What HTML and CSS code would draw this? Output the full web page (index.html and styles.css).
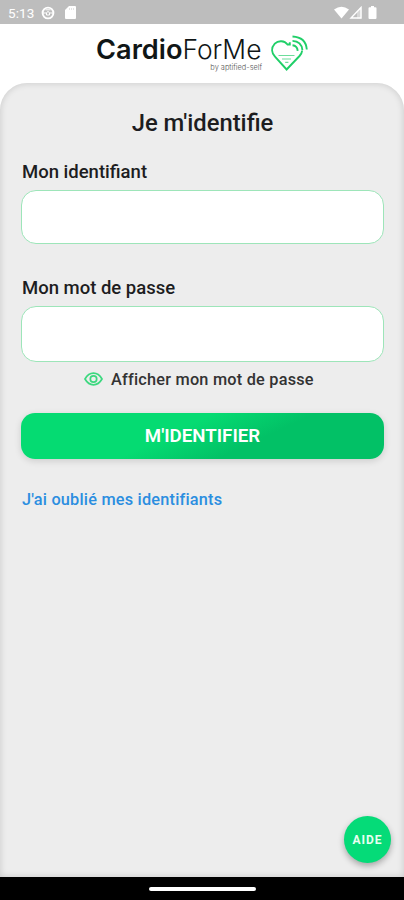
FILE: index.html
```
<!DOCTYPE html>
<html lang="fr">
<head>
<meta charset="utf-8">
<title>CardioForMe</title>
<link rel="stylesheet" href="styles.css">
</head>
<body>
<div class="status">
  <span class="time">5:13</span>
  <svg class="globe" width="14" height="14" viewBox="0 0 14 14"><circle cx="7" cy="7" r="5.400" fill="none" stroke="#fff" stroke-width="1.900"/><path d="M2 7h3.500L7 5.200 8.500 7H12M5.500 7v2h3V7M4.500 3.800h5" fill="none" stroke="#fff" stroke-width="1"/></svg>
  <svg class="card" width="11" height="13" viewBox="0 0 11 13"><path d="M4 0h6a1 1 0 0 1 1 1v11a1 1 0 0 1-1 1H1a1 1 0 0 1-1-1V4z" fill="#fff"/><path d="M4.500 2v2M6.500 2v2M8.500 2v2" stroke="#ddd" stroke-width=".8"/></svg>
  <svg class="signals" width="44" height="14" viewBox="0 0 44 14"><path d="M0 3.500Q7.500-2 15 3.500L7.500 12.500z" fill="#fff"/><path d="M27 1.500V12H17z" fill="none" stroke="#fff" stroke-width="1.400"/><path d="M23 5.500 27.500 1v11.500H23z" fill="#fff" opacity=".4"/><path d="M37 0h3v1.300h1.500q1 0 1 1V12q0 1-1 1h-6q-1 0-1-1V2.300q0-1 1-1H37z" fill="#fff"/></svg>
</div>
<header class="brand">
  <div class="wordmark">
    <div class="name"><b>Cardio</b><span>ForMe</span></div>
    <div class="by">by aptified-self</div>
  </div>
  <svg class="heart" width="40" height="38" viewBox="0 0 40 38"><g fill="none" stroke="#20cf68" stroke-width="1.900"><path d="M19.800 8.200V10.500H17.500C14.500 6.600 8.500 6 4.800 9.700c-4 4.300-3.200 9.300.2 13L16.600 35.500 29.500 22c1.500-1.700 2.500-3.500 2.700-5.500"/><path d="M22.500 11.300q4.700.5 5.200 5.500"/><path d="M22.500 6.900q9 .4 9.900 9.100"/><path d="M22.500 2.500q13.300.7 14.300 13"/><path d="M8.500 21.500h16M12 25h9M15.200 28.400h3.200" stroke-width="1.100" stroke="#6cdd9b"/></g></svg>
</header>
<main class="panel">
  <h1>Je m'identifie</h1>
  <label class="label" for="login">Mon identifiant</label>
  <input class="field" id="login" type="text">
  <label class="label second" for="pass">Mon mot de passe</label>
  <input class="field tall" id="pass" type="password">
  <div class="show">
    <svg width="19" height="14" viewBox="0 0 19 14"><g fill="none" stroke="#3cd87f" stroke-width="1.700"><path d="M1 7Q4.300 1.200 9.500 1.200T18 7Q14.700 12.800 9.500 12.800T1 7z"/><circle cx="9.500" cy="7" r="3.200"/></g></svg>
    <span>Afficher mon mot de passe</span>
  </div>
  <button class="submit">M'IDENTIFIER</button>
  <a class="forgot" href="#">J'ai oublié mes identifiants</a>
</main>
<button class="help">AIDE</button>
<div class="navbar"><i></i></div>
</body>
</html>
```
FILE: styles.css
```
* { box-sizing: border-box; }
body {
  margin: 0;
  width: 404px;
  height: 900px;
  overflow: hidden;
  display: flex;
  flex-direction: column;
  background: #fff;
  color: #1d1d1f;
  font-family: Roboto, "Liberation Sans", sans-serif;
}
.status {
  height: 24px;
  flex: none;
  display: flex;
  align-items: center;
  padding: 1px 26px 0 8px;
  background: #bdbdbd;
  color: #fff;
}
.time { font-size: 13.5px; width: 33px; letter-spacing: .1px; }
.card { margin-left: 10px; }
.signals { margin-left: auto; }
.brand {
  height: 59px;
  flex: none;
  display: flex;
  padding-left: 96px;
}
.wordmark { width: 166px; padding-top: 13px; }
.name {
  font: 300 26.4px/24px Inter, sans-serif;
  color: #101616;
  white-space: nowrap;
}
.name b { font-weight: 600; font-size: 27.2px; }
.by {
  margin-top: 1px;
  font: 300 7.4px/9px Inter, sans-serif;
  color: #555;
  text-align: right;
}
.heart { margin: 10px 0 0 8px; }
.panel {
  flex: 1;
  padding: 24px 20px 0 21px;
  background: #ededed;
  border-radius: 27px 27px 0 0;
  box-shadow: inset 0 0 7px rgba(0, 0, 0, .16);
}
h1 {
  margin: 0;
  font-size: 23.8px;
  line-height: 32px;
  font-weight: 500;
  text-align: center;
}
.label {
  display: block;
  margin-top: 22px;
  padding-left: 1px;
  font-size: 18.5px;
  line-height: 22px;
  font-weight: 500;
}
.field {
  display: block;
  width: 363px;
  height: 54px;
  margin-top: 7px;
  border: 1px solid #9de5b9;
  border-radius: 15px;
  background: #fff;
}
.second { margin-top: 33px; }
.tall { height: 56px; }
.show {
  display: flex;
  align-items: center;
  height: 20px;
  margin: 7px 0 0 63px;
  gap: 8px;
  font-size: 16.3px;
  letter-spacing: .22px;
  font-weight: 500;
  color: #333;
  white-space: nowrap;
}
.submit {
  display: block;
  width: 363px;
  height: 46px;
  margin-top: 24px;
  padding: 0;
  border: 0;
  border-radius: 14px;
  background: linear-gradient(155deg, #05db72 42%, #02c166 64%);
  box-shadow: 0 2px 7px rgba(0, 0, 0, .14);
  color: #fff;
  font: 600 18.7px/45px Roboto, sans-serif;
}
.forgot {
  display: block;
  margin: 31px 0 0 1px;
  font-size: 16.3px;
  letter-spacing: .21px;
  line-height: 20px;
  font-weight: 500;
  color: #2b8ee0;
  text-decoration: none;
}
.help {
  position: absolute;
  left: 344px;
  top: 816px;
  width: 47px;
  height: 47px;
  padding: 0;
  border: 0;
  border-radius: 50%;
  background: #05db78;
  box-shadow: 0 3px 6px rgba(0, 0, 0, .3);
  color: #e9fff2;
  font: 700 12px/48px Roboto, sans-serif;
  letter-spacing: 1px;
}
.navbar {
  height: 23px;
  flex: none;
  display: flex;
  justify-content: center;
  align-items: center;
  background: #000;
}
.navbar i { width: 107px; height: 4px; border-radius: 2px; background: #fff; }
```
